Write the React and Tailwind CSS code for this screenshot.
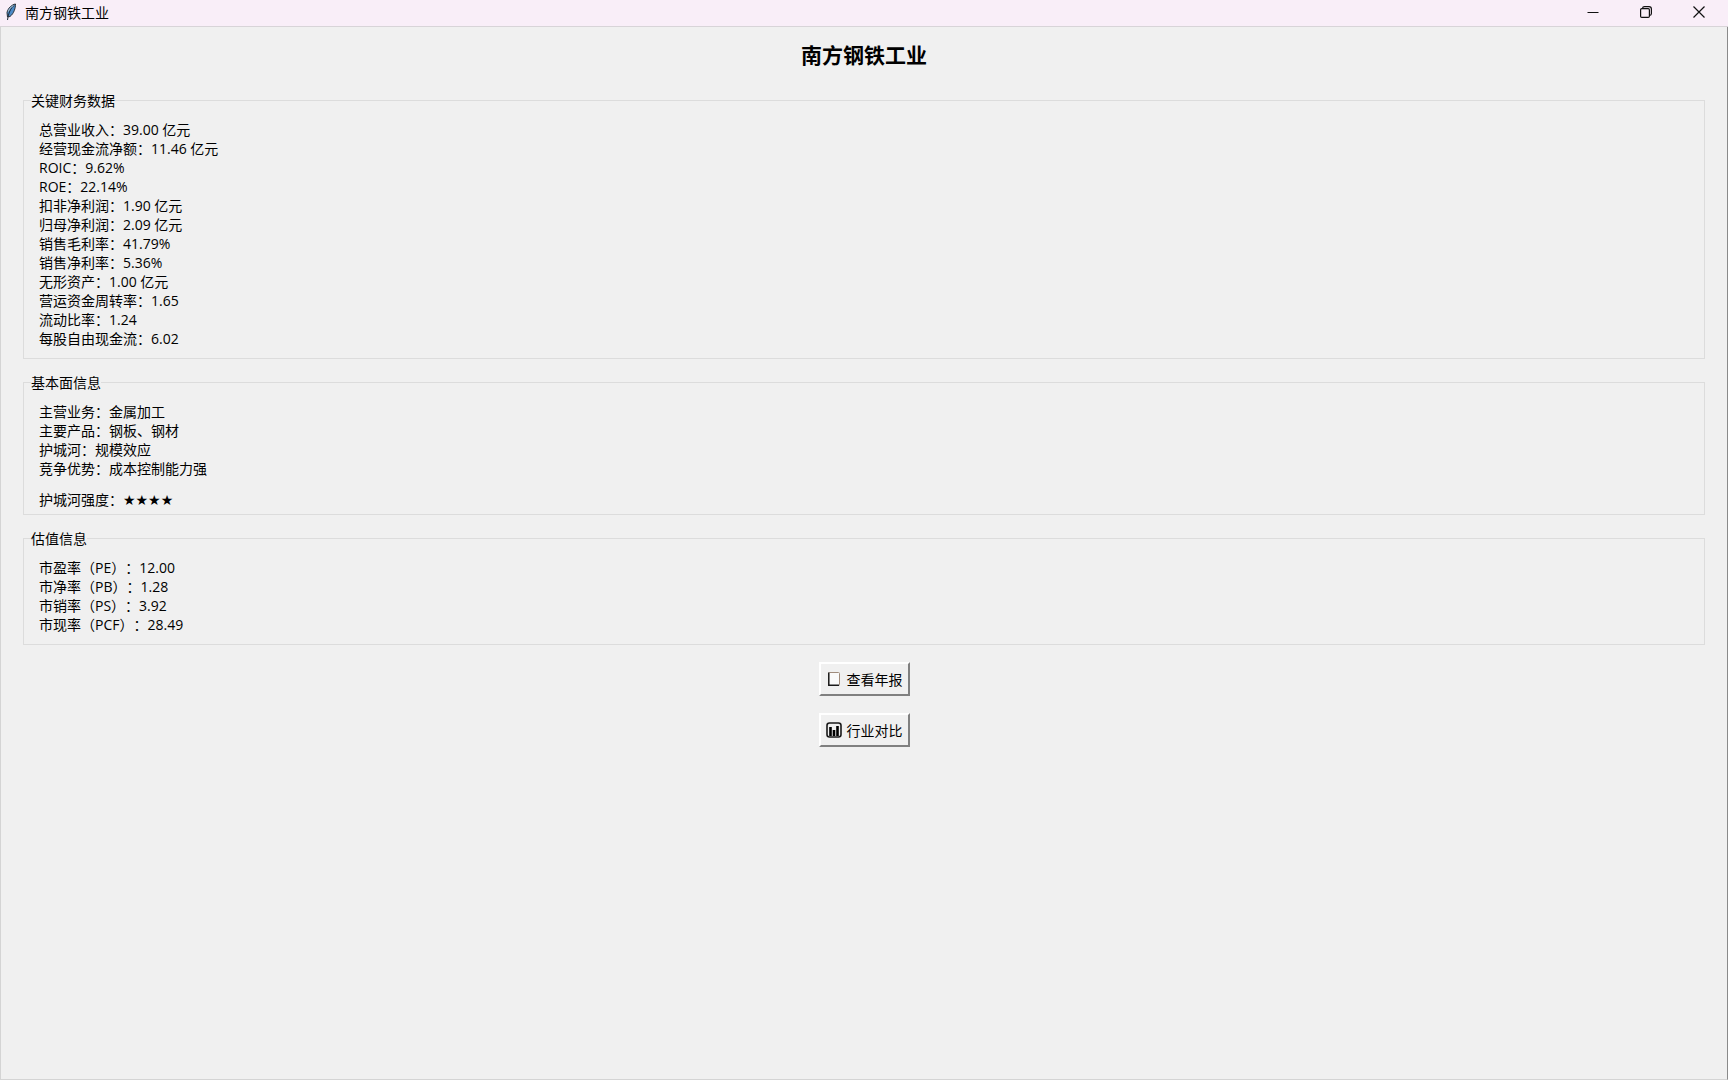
const sections = [
  {
    title: "关键财务数据",
    rows: [
      "总营业收入：39.00 亿元",
      "经营现金流净额：11.46 亿元",
      "ROIC：9.62%",
      "ROE：22.14%",
      "扣非净利润：1.90 亿元",
      "归母净利润：2.09 亿元",
      "销售毛利率：41.79%",
      "销售净利率：5.36%",
      "无形资产：1.00 亿元",
      "营运资金周转率：1.65",
      "流动比率：1.24",
      "每股自由现金流：6.02",
    ],
  },
  {
    title: "基本面信息",
    rows: [
      "主营业务：金属加工",
      "主要产品：钢板、钢材",
      "护城河：规模效应",
      "竞争优势：成本控制能力强",
    ],
    moat: 4,
  },
  {
    title: "估值信息",
    rows: [
      "市盈率（PE）：12.00",
      "市净率（PB）：1.28",
      "市销率（PS）：3.92",
      "市现率（PCF）：28.49",
    ],
  },
];

function FeatherIcon() {
  return (
    <svg width="12" height="18" viewBox="0 0 12 18" aria-hidden="true">
      <path d="M10.5 1C7 1.5 3 5 2 9.5L2.5 14L5 13.5C9 10.5 10.5 5 10.5 1Z" fill="#4b8bc8" stroke="#2b3036" />
      <path d="M9.5 2C5.5 5 3.5 10 2.5 17" fill="none" stroke="#1c2a3a" />
      <path d="M8.5 2.5C5.5 4 4 6.5 3.3 8.5" fill="none" stroke="#b9c3cc" />
    </svg>
  );
}

function NotebookIcon() {
  return (
    <svg width="16" height="16" viewBox="0 0 16 16" aria-hidden="true">
      <rect x="2.5" y="1.5" width="11" height="13" rx="1" fill="#fafafa" stroke="#a08c7c" />
      <path d="M2.8 1.5V14.2H13" fill="none" stroke="#1a1a1a" strokeWidth="1.5" />
    </svg>
  );
}

function ChartIcon() {
  return (
    <svg width="16" height="16" viewBox="0 0 16 16" aria-hidden="true">
      <rect x="1" y="1" width="14" height="14" rx="2.5" fill="#f0f0f0" stroke="#1a1a1a" strokeWidth="1.6" />
      <path d="M4.5 5V14M8 8V14M11.5 4V14" stroke="#000" strokeWidth="2.6" />
    </svg>
  );
}

function TitleBar() {
  return (
    <header className="flex h-[27px] items-center justify-between border-b border-[#d8d4d8] bg-[#f9eef8] pr-[3px] pb-[2px]">
      <div className="flex items-center gap-2 pl-[5px]">
        <FeatherIcon />
        <span>南方钢铁工业</span>
      </div>
      <div className="flex h-full">
        <button aria-label="最小化" className="flex w-[53px] items-center justify-center">
          <svg width="12" height="12" viewBox="0 0 12 12" fill="none" stroke="#111">
            <path d="M.5 6.5H11.5" />
          </svg>
        </button>
        <button aria-label="还原" className="flex w-[53px] items-center justify-center">
          <svg width="12" height="12" viewBox="0 0 12 12" fill="none" stroke="#111" strokeWidth="1.2">
            <rect x="0.6" y="2.6" width="8.8" height="8.8" rx="1.2" />
            <path d="M2.5 2.4Q2.7 .6 4.5 .6H9Q11.4 .6 11.4 3V7.500Q11.4 9.300 9.6 9.5" />
          </svg>
        </button>
        <button aria-label="关闭" className="flex w-[53px] items-center justify-center">
          <svg width="12" height="12" viewBox="0 0 12 12" fill="none" stroke="#111" strokeWidth="1.2">
            <path d="M.5 .5L11.5 11.5M11.5 .5L.5 11.5" />
          </svg>
        </button>
      </div>
    </header>
  );
}

function Section({ title, rows, moat }) {
  return (
    <fieldset
      className={
        moat
          ? "border border-[#dcdcdc] px-[15px] pt-[10px] pb-1"
          : "border border-[#dcdcdc] px-[15px] pt-[10px] pb-[10px]"
      }
    >
      <legend className="-ml-2">{title}</legend>
      {rows.map((row) => (
        <p key={row}>{row}</p>
      ))}
      {moat && (
        <p className="mt-3">
          护城河强度：
          <span className="font-['DejaVu_Sans']">{"★".repeat(moat)}</span>
        </p>
      )}
    </fieldset>
  );
}

function ToolButton({ icon, children }) {
  return (
    <button className="flex h-[34px] items-center gap-[5px] border-2 border-t-white border-r-[#808080] border-b-[#808080] border-l-white px-[5px]">
      {icon}
      {children}
    </button>
  );
}

export default function App() {
  return (
    <div className="flex min-h-screen flex-col bg-[#f0f0f0] font-['Open_Sans','Noto_Sans_CJK_SC',sans-serif] text-[14px] leading-[19px] text-black [text-spacing-trim:space-all]">
      <TitleBar />
      <main className="flex-1 border-x border-b border-l-[#d4d4d4] border-r-[#8a8a8a] border-b-[#d4d4d4] px-[22px] pt-[13px]">
        <h1 className="mb-[21px] text-center text-[21px] leading-[30px] font-bold">
          南方钢铁工业
        </h1>
        <div className="flex flex-col gap-[14px]">
          {sections.map((section) => (
            <Section key={section.title} {...section} />
          ))}
        </div>
        <div className="mt-[17px] flex flex-col items-center gap-[17px]">
          <ToolButton icon={<NotebookIcon />}>查看年报</ToolButton>
          <ToolButton icon={<ChartIcon />}>行业对比</ToolButton>
        </div>
      </main>
    </div>
  );
}
